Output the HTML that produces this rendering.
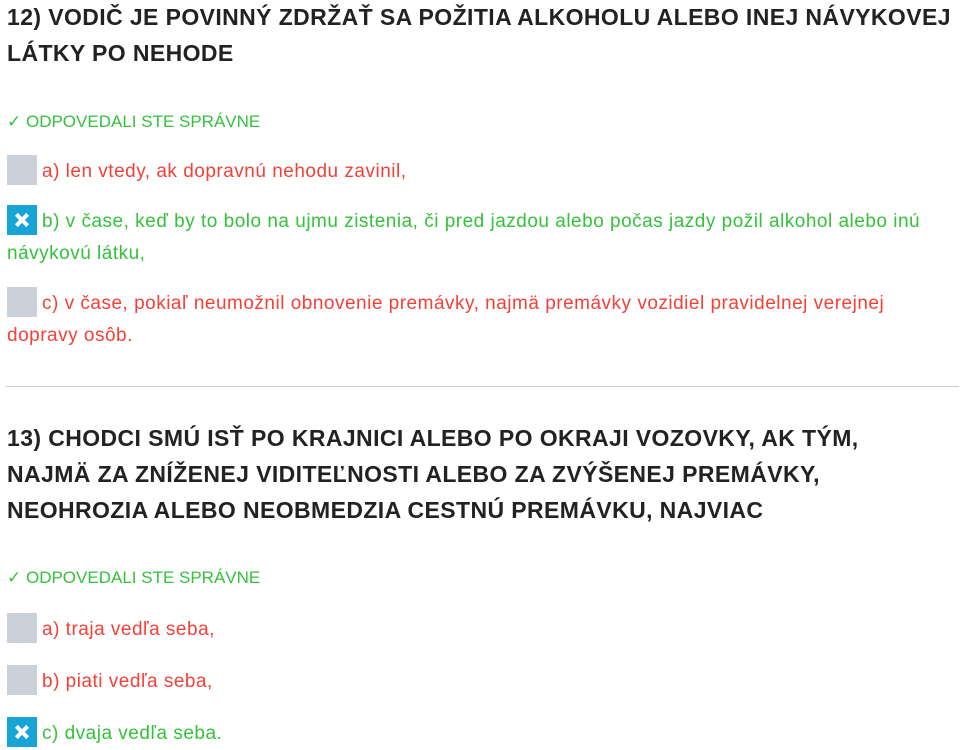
<!DOCTYPE html>
<html><head><meta charset="utf-8"><style>
body{margin:0;width:979px;height:750px;background:#fff;font-family:"Liberation Sans",sans-serif;position:relative;overflow:hidden}
.t{position:absolute;left:7px;font-size:23px;font-weight:bold;color:#222;line-height:36px;white-space:nowrap;letter-spacing:0.4px}
.l{position:absolute;left:7px;font-size:17px;color:#35c13c;white-space:nowrap}
.o{position:absolute;left:7px;font-size:19px;line-height:32px;white-space:nowrap;letter-spacing:0.5px}
.r{color:#f3413a}.g{color:#35c13c}
.b{display:inline-block;width:30px;height:30px;vertical-align:-8px;margin-right:5px;background:#cbd1d9;position:relative}
.x{background:#17a5d6}
.x:before,.x:after{content:"";position:absolute;left:7px;top:13px;width:16px;height:4px;background:#fff;transform:rotate(45deg)}
.x:after{transform:rotate(-45deg)}
hr{position:absolute;left:6px;top:386px;width:953px;margin:0;border:0;border-top:1px solid #ccc}
</style></head><body>
<div class="t" style="top:-1px">12) VODIČ JE POVINNÝ ZDRŽAŤ SA POŽITIA ALKOHOLU ALEBO INEJ NÁVYKOVEJ<br>LÁTKY PO NEHODE</div>
<div class="l" style="top:112px">✓ ODPOVEDALI STE SPRÁVNE</div>
<div class="o r" style="top:155px"><span class="b"></span>a) len vtedy, ak dopravnú nehodu zavinil,</div>
<div class="o g" style="top:205px"><span class="b x"></span>b) v čase, keď by to bolo na ujmu zistenia, či pred jazdou alebo počas jazdy požil alkohol alebo inú<br>návykovú látku,</div>
<div class="o r" style="top:287px"><span class="b"></span>c) v čase, pokiaľ neumožnil obnovenie premávky, najmä premávky vozidiel pravidelnej verejnej<br>dopravy osôb.</div>
<hr>
<div class="t" style="top:420px">13) CHODCI SMÚ ISŤ PO KRAJNICI ALEBO PO OKRAJI VOZOVKY, AK TÝM,<br>NAJMÄ ZA ZNÍŽENEJ VIDITEĽNOSTI ALEBO ZA ZVÝŠENEJ PREMÁVKY,<br>NEOHROZIA ALEBO NEOBMEDZIA CESTNÚ PREMÁVKU, NAJVIAC</div>
<div class="l" style="top:568px">✓ ODPOVEDALI STE SPRÁVNE</div>
<div class="o r" style="top:613px"><span class="b"></span>a) traja vedľa seba,</div>
<div class="o r" style="top:665px"><span class="b"></span>b) piati vedľa seba,</div>
<div class="o g" style="top:717px"><span class="b x"></span>c) dvaja vedľa seba.</div>
</body></html>
